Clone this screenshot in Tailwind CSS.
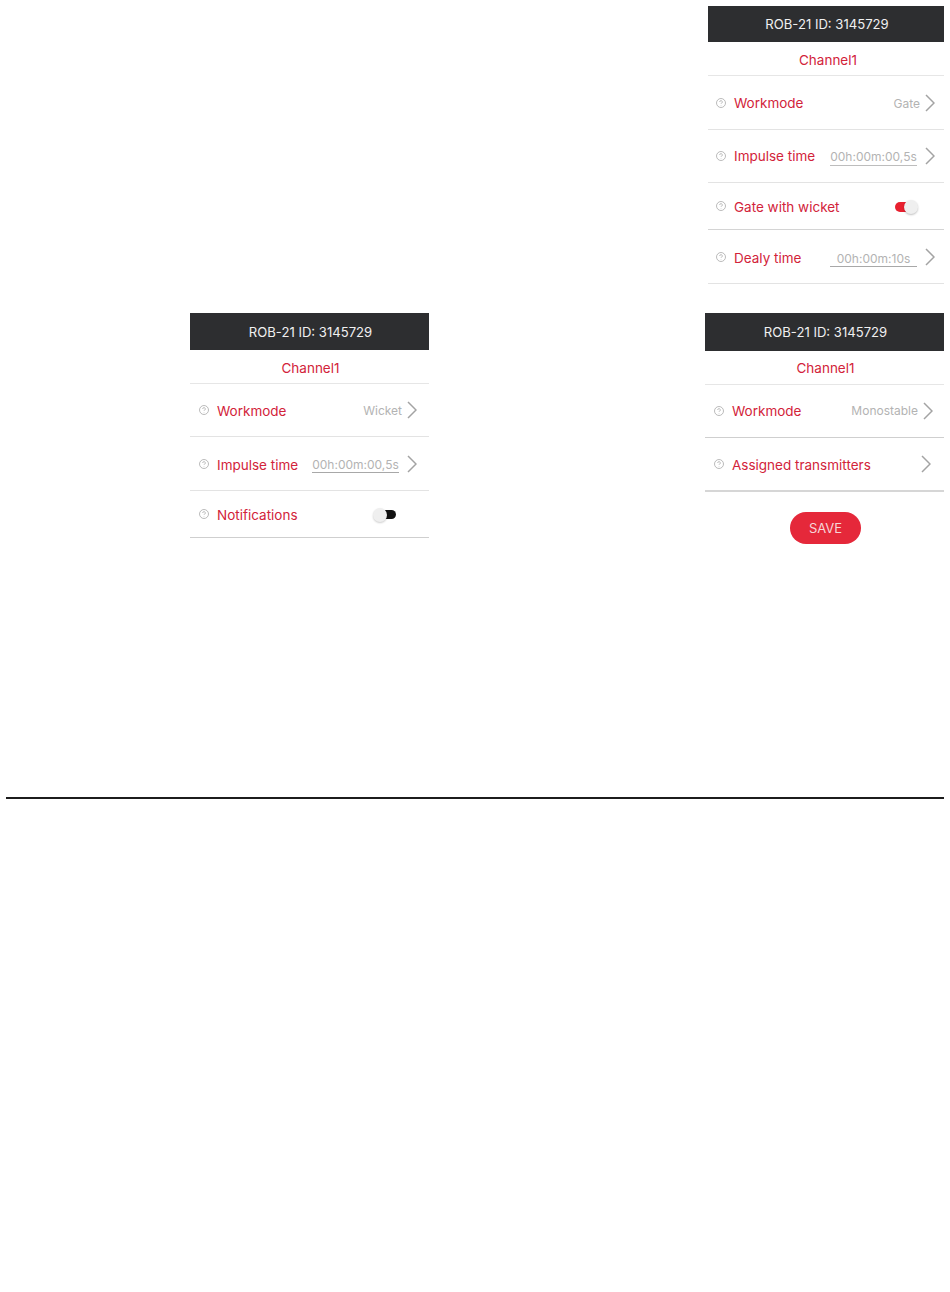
<!DOCTYPE html>
<html>
<head>
<meta charset="utf-8">
<script src="https://cdn.jsdelivr.net/npm/@tailwindcss/browser@4"></script>
</head>
<body class="bg-white">
<div class="w-[950px] h-[1292px] pt-[6px] font-['Inter',sans-serif] text-[13.5px] text-[#d2233a] overflow-hidden">

  <div class="flex justify-end pr-[6px]">
    <section class="w-[236px]">
      <div class="h-[36px] bg-[#2d2e30] text-[#f0f0f0] text-[13.1px] flex items-center justify-center pl-[2px] pt-[2px]">ROB-21 ID: 3145729</div>
      <div class="h-[34px] border-b border-[#e6e6e6] flex items-center justify-center pl-[4px] pt-[4px]">Channel1</div>
      <div class="h-[54px] border-b border-[#e3e3e3] flex items-center pl-[8px] pr-[9px]">
        <svg class="w-[10px] h-[10px] mr-[8px] shrink-0" viewBox="0 0 10 10" fill="none" stroke="#aaaaaa" stroke-width="0.8"><circle cx="5" cy="5" r="4.5"/><path d="M3.7 4a1.3 1.3 0 1 1 1.9 1.1c-.4.2-.6.4-.6.8M5 7.2v.4"/></svg>
        <span class="pt-[2px]">Workmode</span>
        <span class="ml-auto text-[12px] text-[#b3b3b3] pt-[2px]">Gate</span>
        <svg class="w-[10px] h-[18px] ml-[5px] shrink-0" viewBox="0 0 10 18" fill="none" stroke="#a3a3a3" stroke-width="1.5"><path d="M1 1l8 8-8 8"/></svg>
      </div>
      <div class="h-[53px] border-b border-[#e3e3e3] flex items-center pl-[8px] pr-[9px]">
        <svg class="w-[10px] h-[10px] mr-[8px] shrink-0" viewBox="0 0 10 10" fill="none" stroke="#aaaaaa" stroke-width="0.8"><circle cx="5" cy="5" r="4.5"/><path d="M3.7 4a1.3 1.3 0 1 1 1.9 1.1c-.4.2-.6.4-.6.8M5 7.2v.4"/></svg>
        <span>Impulse time</span>
        <span class="ml-auto w-[87px] h-[19px] text-[12px] leading-[20px] text-center text-[#b3b3b3] border-b border-[#bdbdbd]">00h:00m:00,5s</span>
        <svg class="w-[10px] h-[18px] ml-[8px] shrink-0" viewBox="0 0 10 18" fill="none" stroke="#a3a3a3" stroke-width="1.5"><path d="M1 1l8 8-8 8"/></svg>
      </div>
      <div class="h-[47px] border-b border-[#d4d4d4] flex items-center pl-[8px]">
        <svg class="w-[10px] h-[10px] mr-[8px] shrink-0" viewBox="0 0 10 10" fill="none" stroke="#aaaaaa" stroke-width="0.8"><circle cx="5" cy="5" r="4.5"/><path d="M3.7 4a1.3 1.3 0 1 1 1.9 1.1c-.4.2-.6.4-.6.8M5 7.2v.4"/></svg>
        <span class="pt-[2px]">Gate with wicket</span>
        <div class="relative ml-[55px] mt-[2px] w-[23px] h-[14px]">
          <div class="absolute left-0 top-[2px] w-[16px] h-[10px] rounded-full bg-[#e8202f]"></div>
          <div class="absolute right-0 top-0 w-[14px] h-[14px] rounded-full bg-[#efefef] shadow-[0_1px_2px_rgba(0,0,0,0.25)]"></div>
        </div>
      </div>
      <div class="h-[54px] border-b border-[#e3e3e3] flex items-center pl-[8px] pr-[9px]">
        <svg class="w-[10px] h-[10px] mr-[8px] shrink-0" viewBox="0 0 10 10" fill="none" stroke="#aaaaaa" stroke-width="0.8"><circle cx="5" cy="5" r="4.5"/><path d="M3.7 4a1.3 1.3 0 1 1 1.9 1.1c-.4.2-.6.4-.6.8M5 7.2v.4"/></svg>
        <span class="pt-[4px]">Dealy time</span>
        <span class="ml-auto mt-[2px] w-[87px] h-[19px] text-[12px] leading-[21px] text-center text-[#b3b3b3] border-b border-[#a8a8a8]">00h:00m:10s</span>
        <svg class="w-[10px] h-[18px] ml-[8px] shrink-0" viewBox="0 0 10 18" fill="none" stroke="#a3a3a3" stroke-width="1.5"><path d="M1 1l8 8-8 8"/></svg>
      </div>
    </section>
  </div>

  <div class="flex justify-between items-start mt-[29px] pl-[190px] pr-[6px]">
    <section class="w-[239px]">
      <div class="h-[37px] bg-[#2d2e30] text-[#f0f0f0] text-[13.1px] flex items-center justify-center pl-[2px] pt-[2px]">ROB-21 ID: 3145729</div>
      <div class="h-[34px] border-b border-[#e6e6e6] flex items-center justify-center pl-[2px] pt-[4px]">Channel1</div>
      <div class="h-[53px] border-b border-[#e3e3e3] flex items-center pl-[9px] pr-[12px]">
        <svg class="w-[10px] h-[10px] mr-[8px] shrink-0" viewBox="0 0 10 10" fill="none" stroke="#aaaaaa" stroke-width="0.8"><circle cx="5" cy="5" r="4.5"/><path d="M3.7 4a1.3 1.3 0 1 1 1.9 1.1c-.4.2-.6.4-.6.8M5 7.2v.4"/></svg>
        <span class="pt-[2px]">Workmode</span>
        <span class="ml-auto text-[12px] text-[#b3b3b3] pt-[2px]">Wicket</span>
        <svg class="w-[10px] h-[18px] ml-[5px] shrink-0" viewBox="0 0 10 18" fill="none" stroke="#a3a3a3" stroke-width="1.5"><path d="M1 1l8 8-8 8"/></svg>
      </div>
      <div class="h-[54px] border-b border-[#e3e3e3] flex items-center pl-[9px] pr-[12px]">
        <svg class="w-[10px] h-[10px] mr-[8px] shrink-0" viewBox="0 0 10 10" fill="none" stroke="#aaaaaa" stroke-width="0.8"><circle cx="5" cy="5" r="4.5"/><path d="M3.7 4a1.3 1.3 0 1 1 1.9 1.1c-.4.2-.6.4-.6.8M5 7.2v.4"/></svg>
        <span class="pt-[3px]">Impulse time</span>
        <span class="ml-auto w-[87px] h-[19px] text-[12px] leading-[21px] text-center text-[#b3b3b3] border-b border-[#a8a8a8]">00h:00m:00,5s</span>
        <svg class="w-[10px] h-[18px] ml-[8px] shrink-0" viewBox="0 0 10 18" fill="none" stroke="#a3a3a3" stroke-width="1.5"><path d="M1 1l8 8-8 8"/></svg>
      </div>
      <div class="h-[47px] border-b border-[#cfcfcf] flex items-center pl-[9px]">
        <svg class="w-[10px] h-[10px] mr-[8px] shrink-0" viewBox="0 0 10 10" fill="none" stroke="#aaaaaa" stroke-width="0.8"><circle cx="5" cy="5" r="4.5"/><path d="M3.7 4a1.3 1.3 0 1 1 1.9 1.1c-.4.2-.6.4-.6.8M5 7.2v.4"/></svg>
        <span class="pt-[2px]">Notifications</span>
        <div class="relative ml-[75px] mt-[2px] w-[23px] h-[14px]">
          <div class="absolute right-0 top-[2px] w-[16px] h-[9px] rounded-full bg-[#111111]"></div>
          <div class="absolute left-0 top-0 w-[14px] h-[14px] rounded-full bg-[#efefef] shadow-[0_1px_2px_rgba(0,0,0,0.2)]"></div>
        </div>
      </div>
    </section>

    <section class="w-[239px]">
      <div class="h-[38px] bg-[#2d2e30] text-[#f0f0f0] text-[13.1px] flex items-center justify-center pl-[2px] pt-[2px]">ROB-21 ID: 3145729</div>
      <div class="h-[34px] border-b border-[#e6e6e6] flex items-center justify-center pl-[2px] pt-[2px]">Channel1</div>
      <div class="h-[53px] border-b border-[#cfcfcf] flex items-center pl-[9px] pr-[11px]">
        <svg class="w-[10px] h-[10px] mr-[8px] shrink-0" viewBox="0 0 10 10" fill="none" stroke="#aaaaaa" stroke-width="0.8"><circle cx="5" cy="5" r="4.5"/><path d="M3.7 4a1.3 1.3 0 1 1 1.9 1.1c-.4.2-.6.4-.6.8M5 7.2v.4"/></svg>
        <span>Workmode</span>
        <span class="ml-auto text-[12px] text-[#b3b3b3]">Monostable</span>
        <svg class="w-[10px] h-[18px] ml-[5px] shrink-0" viewBox="0 0 10 18" fill="none" stroke="#a3a3a3" stroke-width="1.5"><path d="M1 1l8 8-8 8"/></svg>
      </div>
      <div class="h-[54px] border-b-2 border-[#d6d6d6] flex items-center pl-[9px] pr-[13px]">
        <svg class="w-[10px] h-[10px] mr-[8px] shrink-0" viewBox="0 0 10 10" fill="none" stroke="#aaaaaa" stroke-width="0.8"><circle cx="5" cy="5" r="4.5"/><path d="M3.7 4a1.3 1.3 0 1 1 1.9 1.1c-.4.2-.6.4-.6.8M5 7.2v.4"/></svg>
        <span class="pt-[2px]">Assigned transmitters</span>
        <svg class="ml-auto w-[10px] h-[18px] shrink-0" viewBox="0 0 10 18" fill="none" stroke="#a3a3a3" stroke-width="1.5"><path d="M1 1l8 8-8 8"/></svg>
      </div>
      <div class="flex justify-center mt-[20px] pl-[2px]">
        <button class="w-[71px] h-[32px] rounded-full bg-[#e5283a] text-[#f6d5d8] text-[13px] pt-[2px]">SAVE</button>
      </div>
    </section>
  </div>

  <div class="h-[2px] bg-[#1c1c1c] ml-[6px] mr-[6px] mt-[253px]"></div>
</div>
</body>
</html>
